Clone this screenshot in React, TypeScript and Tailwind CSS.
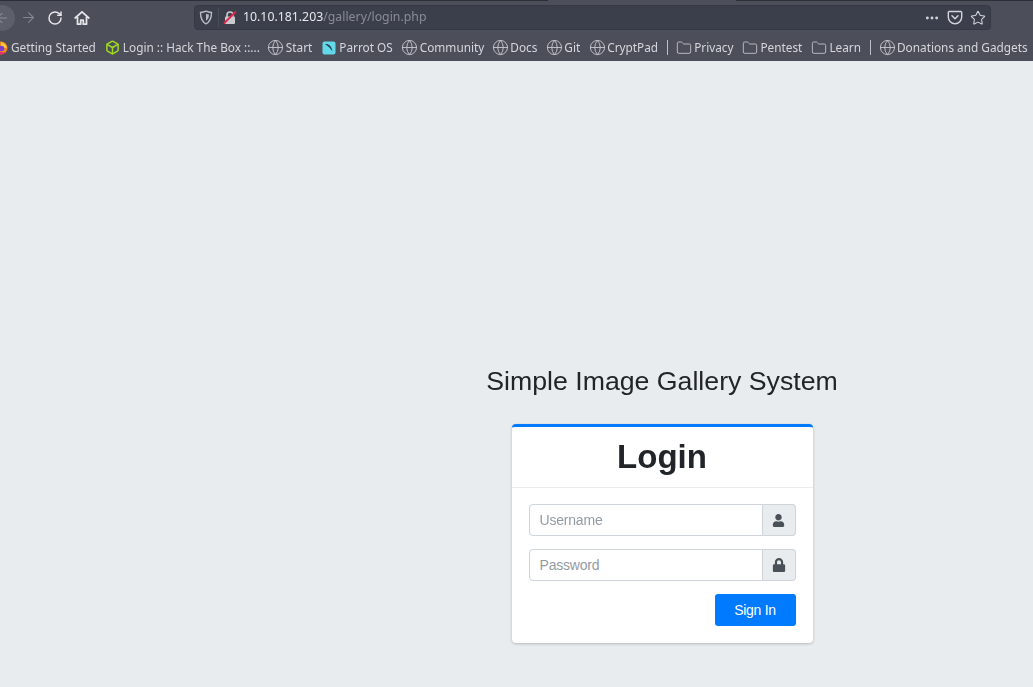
import React from "react";
import { ArrowLeft, ArrowRight, RotateCw, Globe, Folder, Box, Star, Ellipsis } from "lucide-react";
import { FaUser, FaLock } from "react-icons/fa";

function HomeIcon() {
  return (
    <svg width="16" height="16" viewBox="0 0 16 16" fill="none" stroke="#e4e5e9" strokeWidth="1.8" strokeLinejoin="round" className="shrink-0">
      <path d="M1.2 8 8 1.8 14.8 8" strokeLinecap="round" />
      <path d="M3.5 7v7.2h3.2v-4h2.6v4h3.2V7" />
    </svg>
  );
}

function ShieldIcon() {
  return (
    <svg width="14" height="15" viewBox="0 0 14 15" fill="none" className="shrink-0">
      <path d="M7 1.2c2 .9 3.7 1.2 5.5 1.3 0 5.300-1 9-5.500 11.300C2.500 11.500 1.500 7.800 1.500 2.500 3.300 2.400 5 2.100 7 1.200Z" stroke="#b9bbc3" strokeWidth="1.400" />
      <path d="M7 3.800c1 .4 1.900.6 2.900.7 0 2.800-.6 4.900-2.900 6.300Z" fill="#b9bbc3" />
    </svg>
  );
}

function InsecureLock() {
  return (
    <svg width="14" height="15" viewBox="0 0 14 15" fill="none" className="shrink-0">
      <path d="M4 7V5a3 3 0 0 1 6 0v2" stroke="#c9cad0" strokeWidth="1.600" />
      <rect x="2" y="6.500" width="10" height="7.500" rx="1" fill="#c9cad0" />
      <path d="M0.800 13.500 13 1.500" stroke="#e0254a" strokeWidth="1.800" />
    </svg>
  );
}

function PocketIcon() {
  return (
    <svg width="16" height="15" viewBox="0 0 16 15" fill="none" className="shrink-0">
      <path d="M2.200 1.500h11.600c.5 0 .9.400.9.900V7a6.700 6.700 0 0 1-13.400 0V2.400c0-.5.400-.9.900-.9Z" stroke="#d3d4d9" strokeWidth="1.400" />
      <path d="m5 5.800 3 2.900 3-2.900" stroke="#d3d4d9" strokeWidth="1.500" strokeLinecap="round" strokeLinejoin="round" />
    </svg>
  );
}

function FirefoxIcon() {
  return (
    <svg width="14" height="14" viewBox="0 0 14 14" className="shrink-0">
      <circle cx="7" cy="7" r="6.500" fill="#f5871f" />
      <path d="M7 1.500c3 0 5.500 2.500 5.500 5.500H7Z" fill="#ffcf3a" />
      <path d="M1 8.500c1 3 3.500 5 6 5s3.500-1 4.500-2.500C8 12 4 11 1 8.500Z" fill="#e4286b" />
      <circle cx="7.500" cy="7.500" r="2.800" fill="#7b3fd0" />
    </svg>
  );
}

function ParrotIcon() {
  return (
    <svg width="14" height="14" viewBox="0 0 14 14" className="shrink-0">
      <rect x="0.500" y="0.500" width="13" height="13" rx="2" fill="#63d8ea" />
      <path d="M3 3c3.500-.5 6.500 1.500 7.500 7.500C8.800 8 7 5.500 3 3Z" fill="#27404f" />
    </svg>
  );
}

const GlobeIcon = () => <Globe size={17} strokeWidth={1.3} color="#c6c7ce" className="shrink-0" />;
const FolderIcon = () => <Folder size={16} strokeWidth={1.3} color="#c6c7ce" className="shrink-0" />;

function Bookmark({ icon, label, className = "" }: { icon: React.ReactNode; label: string; className?: string }) {
  return (
    <div className={"flex items-center gap-[3px] whitespace-nowrap shrink-0 " + className}>
      <div className="w-[14px] h-[14px] flex items-center justify-center shrink-0">{icon}</div>
      <span>{label}</span>
    </div>
  );
}

const Sep = () => <div className="w-px h-[15px] bg-[#bfc0c7] shrink-0 mx-[-1px]" />;

export default function App() {
  return (
    <div className="h-[687px] w-[1033px] overflow-hidden flex flex-col bg-[#e9ecef] font-['Liberation_Sans',Arial,sans-serif]">
      <header className="h-[61px] bg-[#4c4e5a] shrink-0 flex flex-col overflow-hidden blur-[0.45px]">
        <div className="h-px shrink-0 flex">
          <div className="w-[548px] bg-[#2c2e38]" />
          <div className="w-[188px] bg-[#4c4e5a]" />
          <div className="flex-1 bg-[#2c2e38]" />
        </div>
        <div className="h-[33px] flex items-center shrink-0">
          <div className="w-[26px] h-[26px] rounded-full bg-[#5d5f6a] ml-[-11px] flex items-center justify-center shrink-0">
            <ArrowLeft size={16} color="#8b8d96" strokeWidth={1.600} />
          </div>
          <ArrowRight size={17} color="#83858f" strokeWidth={1.600} className="ml-[5px] shrink-0" />
          <RotateCw size={16} color="#e4e5e9" strokeWidth={2.200} className="ml-[10px] shrink-0" />
          <div className="ml-[11px]"><HomeIcon /></div>
          <div className="ml-[104px] w-[797px] h-[25px] bg-[#3b3e4b] rounded-[4px] border border-[#363844] flex items-center pl-[4px] pr-[4px] text-[12.300px] font-['Noto_Sans',sans-serif]">
            <ShieldIcon />
            <div className="w-px h-[19px] bg-[#4b4d5a] ml-[5px] mr-[4px]" />
            <InsecureLock />
            <span className="ml-[6px] text-[#e8e9ec]">10.10.181.203</span>
            <span className="text-[#8a8c96]">/gallery/login.php</span>
            <div className="flex-1" />
            <Ellipsis size={16} color="#d3d4d9" strokeWidth={2.400} className="mr-[-1px]" />
            <div className="ml-[8px]"><PocketIcon /></div>
            <Star size={16} color="#d3d4d9" strokeWidth={1.600} className="ml-[7px]" />
          </div>
        </div>
        <div className="flex-1 flex items-center gap-[10px] ml-[-6px] text-[11.800px] text-[#d6d7dc] font-['Noto_Sans',sans-serif]">
          <Bookmark icon={<FirefoxIcon />} label="Getting Started" />
          <Bookmark icon={<Box size={15} color="#9fdc1e" strokeWidth={2.400} className="shrink-0" />} label="Login :: Hack The Box ::..." />
          <Bookmark icon={<GlobeIcon />} label="Start" className="ml-[-1px]" />
          <Bookmark icon={<ParrotIcon />} label="Parrot OS" />
          <Bookmark icon={<GlobeIcon />} label="Community" />
          <Bookmark icon={<GlobeIcon />} label="Docs" className="ml-[-1px]" />
          <Bookmark icon={<GlobeIcon />} label="Git" />
          <Bookmark icon={<GlobeIcon />} label="CryptPad" />
          <Sep />
          <Bookmark icon={<FolderIcon />} label="Privacy" />
          <Bookmark icon={<FolderIcon />} label="Pentest" />
          <Bookmark icon={<FolderIcon />} label="Learn" />
          <Sep />
          <Bookmark icon={<GlobeIcon />} label="Donations and Gadgets" />
        </div>
      </header>
      <main className="flex-1 flex flex-col items-center pl-[291px] pt-[303px] blur-[0.3px]">
        <h1 className="text-[26.700px] leading-[34px] text-[#212529] whitespace-nowrap">Simple Image Gallery System</h1>
        <div className="mt-[26px] w-[301px] h-[219px] bg-white rounded-[4px] border-t-[3px] border-[#007bff] shadow-[0_0_1px_rgba(0,0,0,0.13),0_1px_3px_rgba(0,0,0,0.2)] flex flex-col">
          <div className="h-[61px] border-b border-[#ececec] flex items-center justify-center shrink-0 pb-[2px]">
            <span className="text-[33px] font-bold text-[#212529] leading-none">Login</span>
          </div>
          <div className="px-[17px] pt-[16px] flex flex-col gap-[13px]">
            <div className="flex h-[32px]">
              <div className="flex-1 border border-[#ced4da] rounded-l-[4px] bg-white flex items-center pl-[10px] text-[14px] tracking-[-0.2px] text-[#939ba2]">Username</div>
              <div className="w-[33px] bg-[#e9ecef] border border-l-0 border-[#ced4da] rounded-r-[4px] flex items-center justify-center"><FaUser size={13} color="#495057" /></div>
            </div>
            <div className="flex h-[32px]">
              <div className="flex-1 border border-[#ced4da] rounded-l-[4px] bg-white flex items-center pl-[10px] text-[14px] tracking-[-0.2px] text-[#939ba2]">Password</div>
              <div className="w-[33px] bg-[#e9ecef] border border-l-0 border-[#ced4da] rounded-r-[4px] flex items-center justify-center"><FaLock size={14} color="#495057" /></div>
            </div>
            <div className="flex justify-end">
              <button className="w-[81px] h-[32px] bg-[#007bff] text-white text-[14px] tracking-[-0.3px] rounded-[3px]">Sign In</button>
            </div>
          </div>
        </div>
      </main>
    </div>
  );
}
